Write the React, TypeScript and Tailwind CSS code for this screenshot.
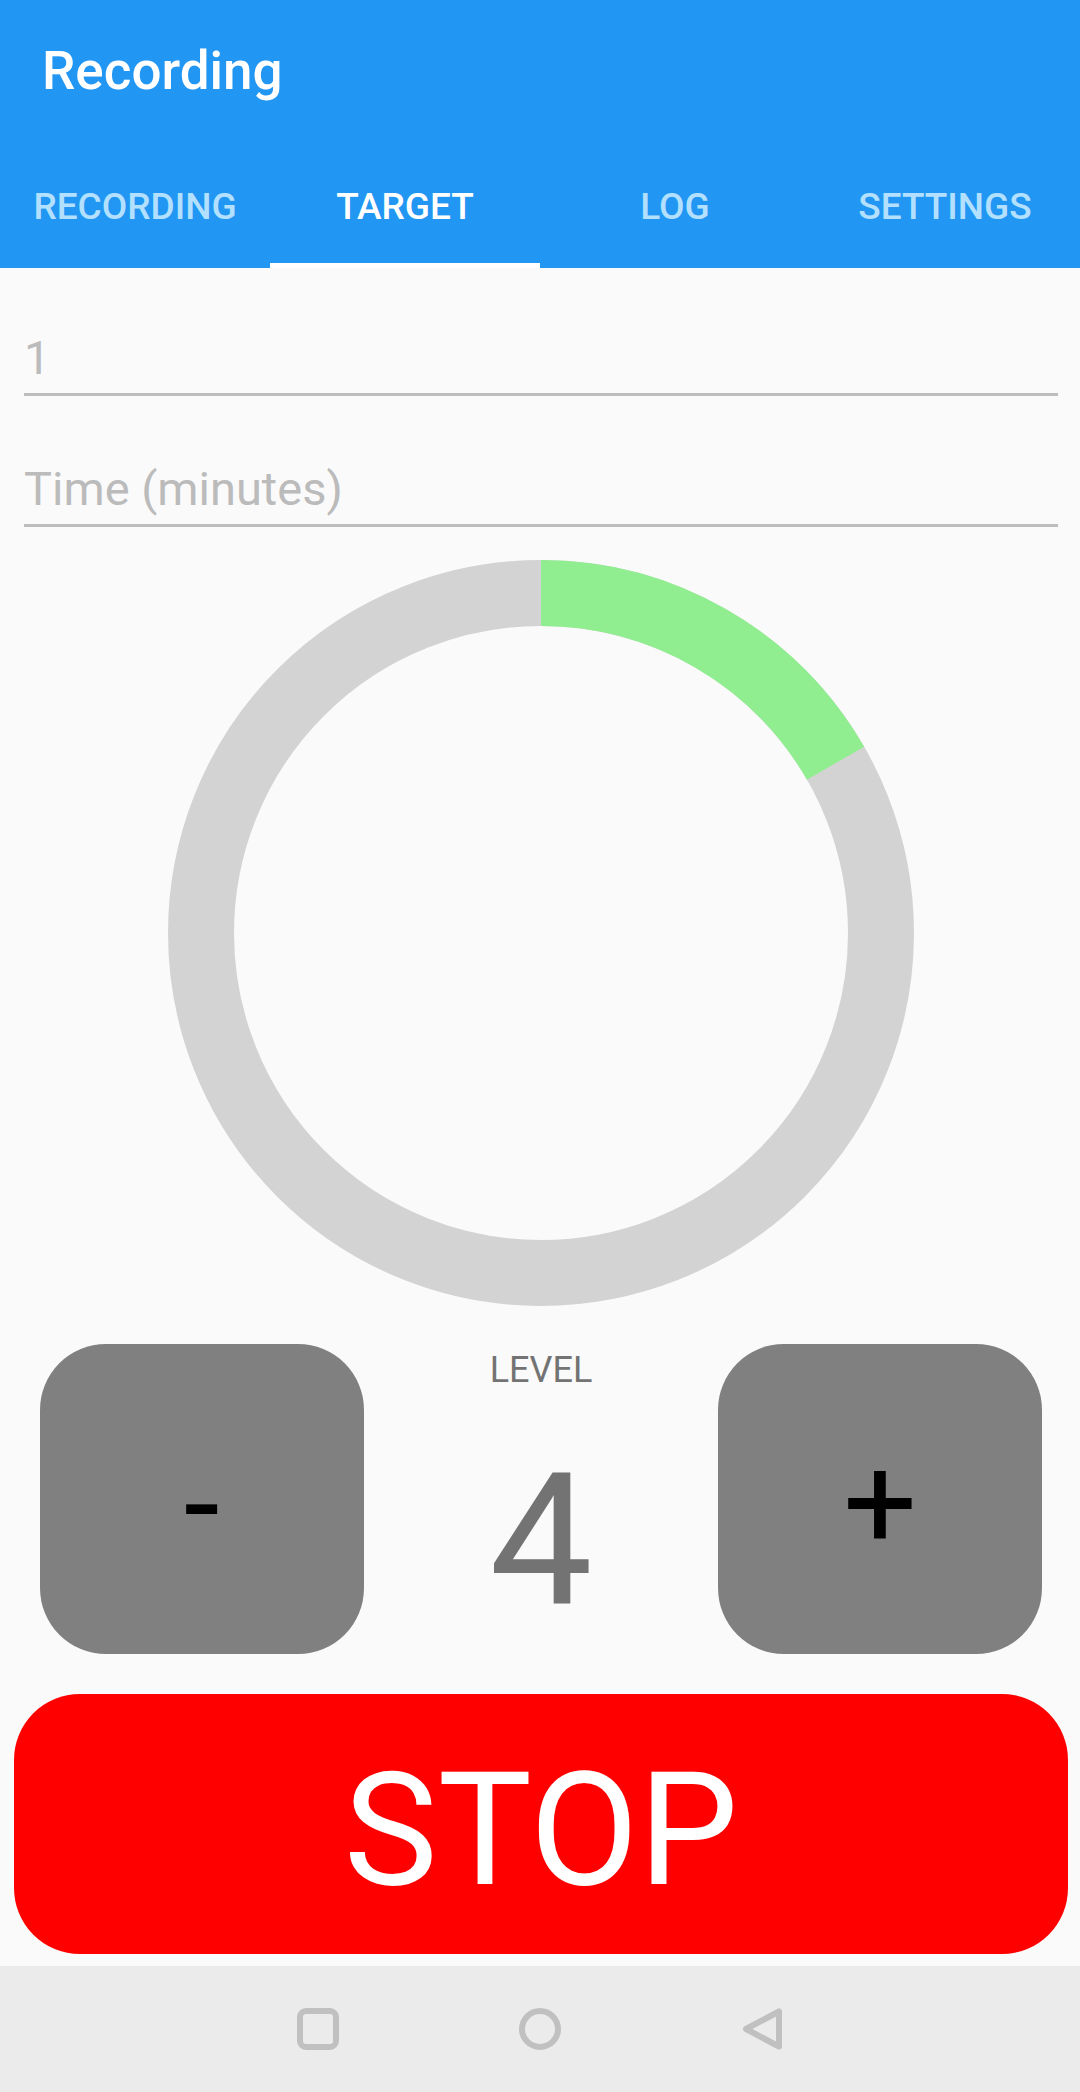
import { useState } from "react";

const TABS = ["Recording", "Target", "Log", "Settings"];

function Tabs() {
  const [active, setActive] = useState("Target");
  return (
    <nav role="tablist" className="grid grid-cols-4">
      {TABS.map((tab) => (
        <button
          key={tab}
          role="tab"
          aria-selected={tab === active}
          onClick={() => setActive(tab)}
          className={
            tab === active
              ? "h-32 border-b-5 border-white pt-2.5 text-[37px] leading-none font-medium text-white uppercase"
              : "h-32 border-b-5 border-transparent pt-2.5 text-[37px] leading-none font-medium text-[#b3e0ff] uppercase"
          }
        >
          {tab}
        </button>
      ))}
    </nav>
  );
}

function Field({ label, placeholder }: { label: string; placeholder: string }) {
  return (
    <input
      type="text"
      inputMode="numeric"
      aria-label={label}
      placeholder={placeholder}
      className="h-20 w-full border-b-3 border-[#bdbdbd] bg-transparent pt-1.5 text-[47px] text-[#212121] outline-none placeholder:text-[#bbbbbb]"
    />
  );
}

function ProgressRing({ value }: { value: number }) {
  const radius = 340;
  const length = 2 * Math.PI * radius;
  return (
    <svg viewBox="0 0 746 746" role="img" aria-label="Progress" className="mx-auto w-[746px] max-w-full">
      <circle cx="373" cy="373" r={radius} fill="none" stroke="#d3d3d3" strokeWidth="66" />
      <circle
        cx="373"
        cy="373"
        r={radius}
        fill="none"
        stroke="#90ee90"
        strokeWidth="66"
        strokeDasharray={`${length * value} ${length}`}
        transform="rotate(-90 373 373)"
      />
    </svg>
  );
}

function StepButton({ label, sign, onClick }: { label: string; sign: string; onClick: () => void }) {
  return (
    <button
      aria-label={label}
      onClick={onClick}
      className="h-[310px] rounded-[66px] bg-[#808080] pt-2.5 text-[130px] leading-none text-black"
    >
      {sign}
    </button>
  );
}

function SystemBar() {
  return (
    <footer className="flex h-[126px] items-center justify-center gap-[180px] bg-[#ebebeb]">
      <button aria-label="Recent apps">
        <svg viewBox="0 0 42 42" className="size-[42px]" fill="none" stroke="#c0c0c0" strokeWidth="6">
          <rect x="3" y="3" width="36" height="36" rx="6" />
        </svg>
      </button>
      <button aria-label="Home">
        <svg viewBox="0 0 42 42" className="size-[42px]" fill="none" stroke="#c0c0c0" strokeWidth="6">
          <circle cx="21" cy="21" r="18" />
        </svg>
      </button>
      <button aria-label="Back">
        <svg viewBox="0 0 42 42" className="size-[42px]" fill="none" stroke="#c0c0c0" strokeWidth="6" strokeLinejoin="round">
          <path d="M38 3.500V38.500L5 21Z" />
        </svg>
      </button>
    </footer>
  );
}

export default function App() {
  const [level, setLevel] = useState(4);
  return (
    <div className="flex min-h-screen flex-col bg-[#fafafa] font-[Roboto,sans-serif]">
      <header className="bg-[#2196f3]">
        <h1 className="flex h-[140px] items-center px-[42px] pt-0.5 text-[53px] leading-none font-medium text-white">
          Recording
        </h1>
        <Tabs />
      </header>
      <main className="flex flex-1 flex-col pl-0.5">
        <div className="flex flex-col gap-[51px] pr-[22px] pl-[22px] pt-12">
          <Field label="Target number" placeholder="1" />
          <Field label="Time (minutes)" placeholder="Time (minutes)" />
        </div>
        <div className="pt-[33px]">
          <ProgressRing value={1 / 6} />
        </div>
        <div className="grid grid-cols-[324fr_355fr_324fr] px-[38px] pt-[38px]">
          <StepButton label="Decrease level" sign="-" onClick={() => setLevel(level - 1)} />
          <div className="flex flex-col items-center text-[#737373]">
            <span className="pt-1.5 text-[36px] leading-10">LEVEL</span>
            <output className="pt-[50px] text-[184px] leading-[200px]">{level}</output>
          </div>
          <StepButton label="Increase level" sign="+" onClick={() => setLevel(level + 1)} />
        </div>
        <div className="px-3 pt-10 pb-3">
          <button className="h-[260px] w-full rounded-[66px] bg-[#ff0000] pt-3 text-[158px] leading-none text-white">
            STOP
          </button>
        </div>
      </main>
      <SystemBar />
    </div>
  );
}
